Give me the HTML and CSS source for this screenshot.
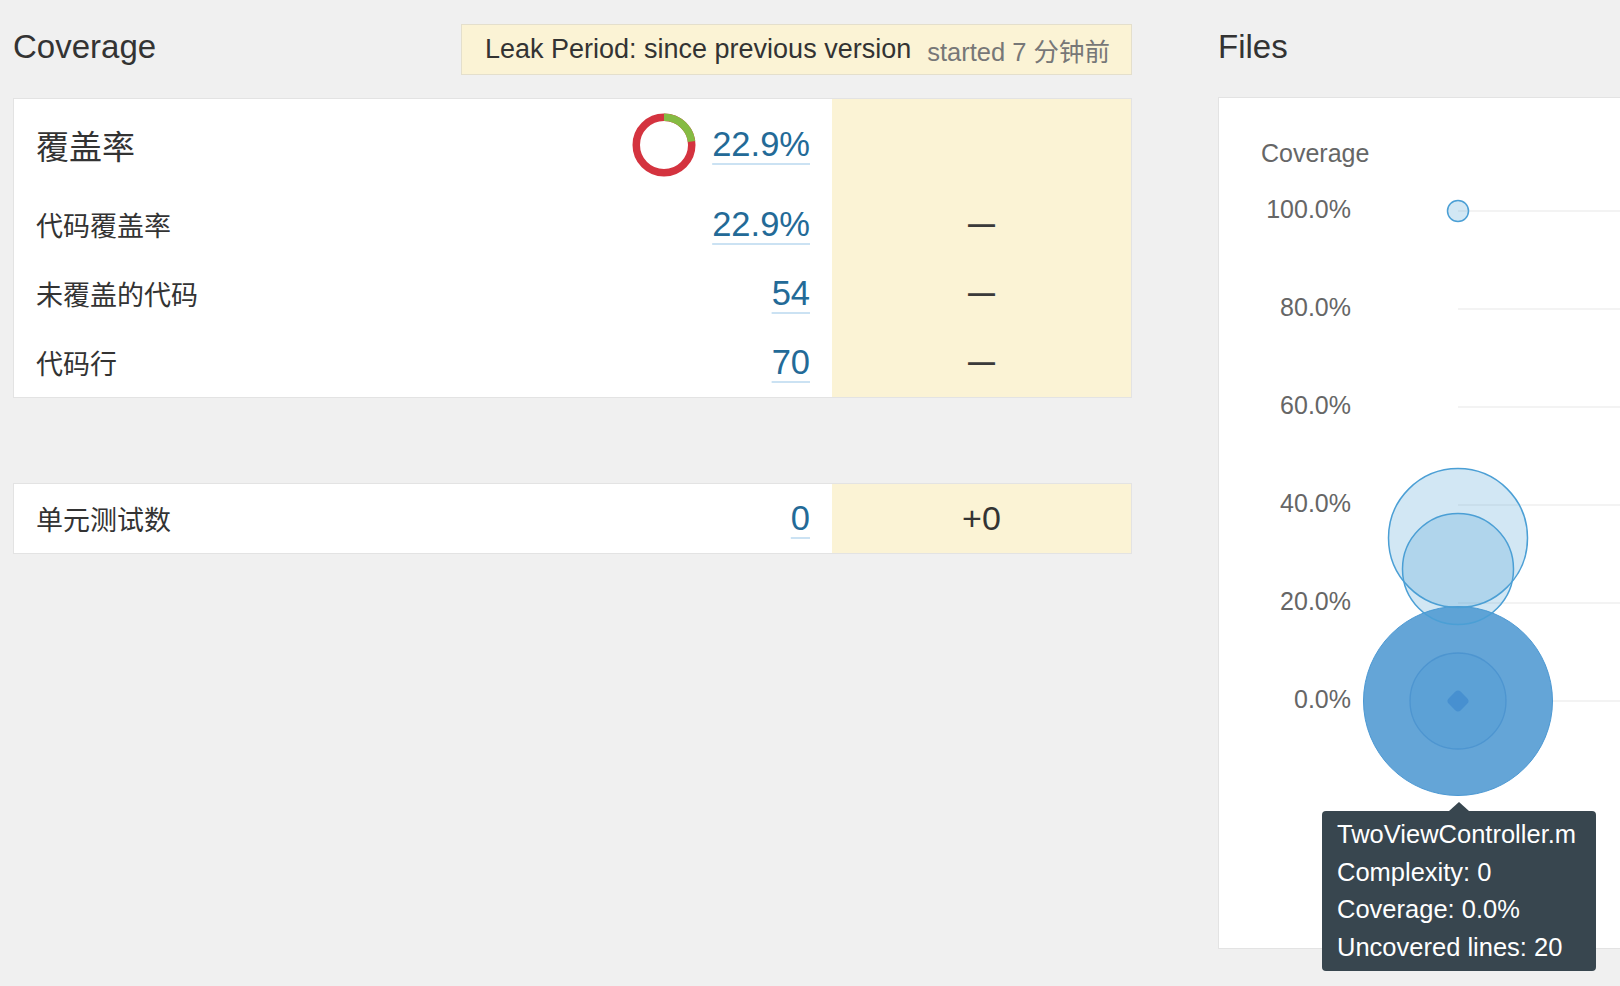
FILE: index.html
```html
<!DOCTYPE html>
<html lang="zh-CN">
<head>
<meta charset="utf-8">
<title>Coverage</title>
<link rel="stylesheet" href="styles.css">
</head>
<body>
<div class="page">
  <section class="col-left">
    <div class="header">
      <h2 class="title">Coverage</h2>
      <div class="leak-banner">
        <span class="leak-label">Leak Period: since previous version</span>
        <span class="leak-date">started 7 分钟前</span>
      </div>
    </div>

    <div class="card card-coverage">
      <div class="row row-first">
        <div class="cell-main">
          <span class="label label-lg">覆盖率</span>
          <span class="value-group">
            <svg class="donut" width="64" height="64" viewBox="0 0 64 64">
              <circle cx="32" cy="32" r="27.75" fill="none" stroke="#d4333f" stroke-width="7.5"/>
              <circle cx="32" cy="32" r="27.75" fill="none" stroke="#85bb43" stroke-width="7.5" stroke-dasharray="39.93 174.36" transform="rotate(-90 32 32)"/>
            </svg>
            <a class="value">22.9%</a>
          </span>
        </div>
        <div class="cell-leak"></div>
      </div>
      <div class="row">
        <div class="cell-main">
          <span class="label">代码覆盖率</span>
          <a class="value">22.9%</a>
        </div>
        <div class="cell-leak"><span class="dash">—</span></div>
      </div>
      <div class="row">
        <div class="cell-main">
          <span class="label">未覆盖的代码</span>
          <a class="value">54</a>
        </div>
        <div class="cell-leak"><span class="dash">—</span></div>
      </div>
      <div class="row">
        <div class="cell-main">
          <span class="label">代码行</span>
          <a class="value">70</a>
        </div>
        <div class="cell-leak"><span class="dash">—</span></div>
      </div>
    </div>

    <div class="card card-tests">
      <div class="row">
        <div class="cell-main">
          <span class="label">单元测试数</span>
          <a class="value">0</a>
        </div>
        <div class="cell-leak"><span class="delta">+0</span></div>
      </div>
    </div>
  </section>

  <section class="col-right">
    <h2 class="title">Files</h2>
    <div class="card files-card">
      <svg class="bubble-chart" width="460" height="850" viewBox="0 0 460 850">
        <text class="axis-title" x="42" y="64">Coverage</text>
        <g class="axis-labels">
          <text x="132" y="120">100.0%</text>
          <text x="132" y="218">80.0%</text>
          <text x="132" y="316">60.0%</text>
          <text x="132" y="414">40.0%</text>
          <text x="132" y="512">20.0%</text>
          <text x="132" y="610">0.0%</text>
        </g>
        <g stroke="#e8e8e8" stroke-width="1.2">
          <line x1="239" y1="113" x2="460" y2="113"/>
          <line x1="239" y1="211" x2="460" y2="211"/>
          <line x1="239" y1="309" x2="460" y2="309"/>
          <line x1="239" y1="407" x2="460" y2="407"/>
          <line x1="239" y1="505" x2="460" y2="505"/>
          <line x1="239" y1="603" x2="460" y2="603"/>
        </g>
        <circle cx="239" cy="603" r="94.5" fill="#5a9fd5" fill-opacity="0.94" stroke="#4b98d3" stroke-width="1"/>
        <circle cx="239" cy="603" r="48" fill="#4b97d3" fill-opacity="0.3" stroke="#4790cd" stroke-opacity="0.75" stroke-width="1.3"/>
        <rect x="230.5" y="594.5" width="17" height="17" rx="4" fill="#4790d0" transform="rotate(45 239 603)"/>
        <circle cx="239" cy="440" r="69.5" fill="#4b9fd5" fill-opacity="0.25" stroke="#4b9fd5" stroke-width="1.5"/>
        <circle cx="239" cy="471" r="55.5" fill="#4b9fd5" fill-opacity="0.25" stroke="#4b9fd5" stroke-width="1.5"/>
        <circle cx="239" cy="113" r="10.5" fill="#4b9fd5" fill-opacity="0.25" stroke="#4b9fd5" stroke-width="1.5"/>
      </svg>
      <div class="tooltip">
        <div>TwoViewController.m</div>
        <div>Complexity: 0</div>
        <div>Coverage: 0.0%</div>
        <div>Uncovered lines: 20</div>
      </div>
    </div>
  </section>
</div>
</body>
</html>
```

FILE: styles.css
```css
html, body {
  margin: 0;
  padding: 0;
}

body {
  background: #f0f0f0;
  color: #333;
  font-family: "Liberation Sans", Arial, "Noto Sans CJK SC", sans-serif;
  overflow: hidden;
  width: 1620px;
  height: 986px;
}

.page {
  display: flex;
  gap: 86px;
  padding: 24px 0 0 13px;
}

.col-left {
  width: 1119px;
  flex: none;
}

.col-right {
  width: 460px;
  flex: none;
}

.header {
  display: flex;
  justify-content: space-between;
  align-items: flex-start;
  height: 51px;
}

.title {
  margin: 0;
  font-size: 33px;
  line-height: 46px;
  font-weight: normal;
  color: #333;
}

.leak-banner {
  box-sizing: border-box;
  height: 51px;
  display: flex;
  align-items: center;
  padding: 0 21px 0 23px;
  background: #fbf3d5;
  border: 1px solid #e4dfcc;
}

.leak-label {
  font-size: 27px;
  color: #333;
}

.leak-date {
  font-size: 25.5px;
  color: #777;
  margin-left: 16px;
  font-family: "Liberation Sans", Arial, "Noto Sans CJK SC", sans-serif;
}

.card {
  background: #fff;
  border: 1px solid #e3e3e3;
}

.card-coverage {
  margin-top: 23px;
}

.card-tests {
  margin-top: 85px;
}

.row {
  display: flex;
  height: 69px;
}

.row-first {
  height: 91px;
}

.cell-main {
  flex: 1;
  display: flex;
  align-items: center;
  justify-content: space-between;
  padding: 0 22px 0 22px;
}

.cell-leak {
  width: 299px;
  flex: none;
  background: #fbf3d5;
  display: flex;
  align-items: center;
  justify-content: center;
}

.label {
  font-family: "Noto Sans CJK SC", "Liberation Sans", sans-serif;
  font-size: 27px;
  color: #333;
}

.label-lg {
  font-size: 33px;
}

.value-group {
  display: flex;
  align-items: center;
  gap: 16px;
}

.donut {
  display: block;
}

.value {
  font-size: 34.5px;
  color: #236a97;
  text-decoration: underline;
  text-decoration-color: #cbe2f3;
  text-decoration-thickness: 2px;
  text-underline-offset: 7px;
  cursor: pointer;
}

.dash {
  font-size: 27px;
  color: #3a3a3a;
  font-weight: bold;
}

.delta {
  font-size: 34px;
  color: #333;
}

.files-card {
  margin-top: 27px;
  height: 850px;
  position: relative;
  border-right: none;
}

.bubble-chart {
  display: block;
}

.bubble-chart text {
  font-family: "Liberation Sans", Arial, sans-serif;
  font-size: 25px;
  fill: #666;
}

.axis-labels text {
  text-anchor: end;
}

.tooltip {
  position: absolute;
  left: 103px;
  top: 713px;
  width: 274px;
  box-sizing: border-box;
  padding: 5px 15px;
  background: #38464f;
  border-radius: 4px;
  color: #fff;
  font-size: 25.5px;
  line-height: 37.5px;
  white-space: nowrap;
}

.tooltip::before {
  content: "";
  position: absolute;
  left: 50%;
  top: -9px;
  margin-left: -10px;
  border-left: 10px solid transparent;
  border-right: 10px solid transparent;
  border-bottom: 9px solid #38464f;
}
```
